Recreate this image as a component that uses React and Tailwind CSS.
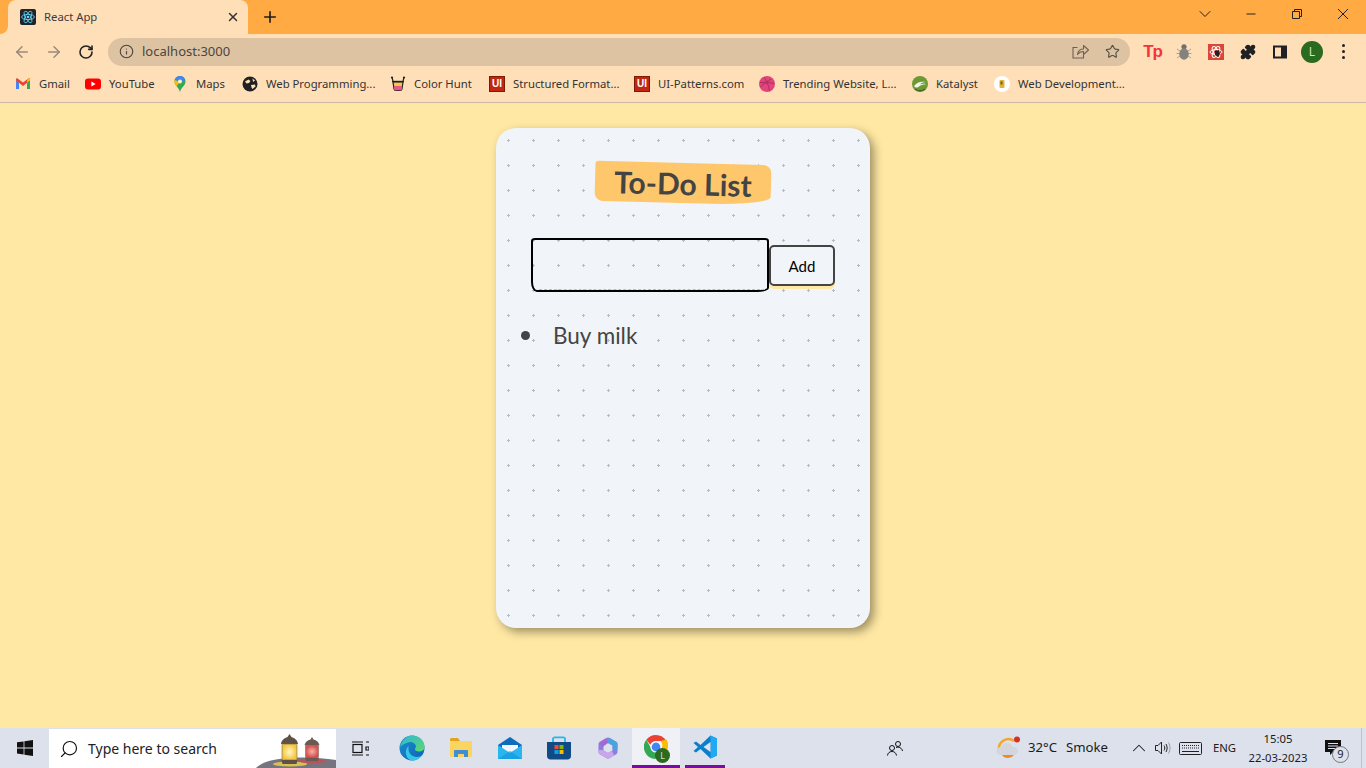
import { ArrowLeft, ArrowRight, RotateCw, Info, Star, Puzzle, X, Plus, ChevronDown, ChevronUp, Minus, Search } from "lucide-react";

function ReactIcon() {
  return (
    <svg width="16" height="16" viewBox="0 0 16 16" fill="none">
      <rect width="16" height="16" rx="2" fill="#20232a" />
      <g stroke="#61dafb" strokeWidth="0.8">
        <ellipse cx="8" cy="8" rx="6.4" ry="2.6" />
        <ellipse cx="8" cy="8" rx="6.4" ry="2.6" transform="rotate(60 8 8)" />
        <ellipse cx="8" cy="8" rx="6.4" ry="2.6" transform="rotate(120 8 8)" />
      </g>
      <circle cx="8" cy="8" r="1.3" fill="#61dafb" />
    </svg>
  );
}

function GmailIcon() {
  return (
    <svg width="16" height="16" viewBox="0 0 16 16">
      <path d="M1 4v9h3V6.5z" fill="#4285f4" />
      <path d="M15 4v9h-3V6.5z" fill="#34a853" />
      <path d="M1 4.5 8 10l7-5.5V3.2C15 2.4 14 2 13.4 2.5L8 6.6 2.6 2.5C2 2 1 2.4 1 3.2z" fill="#ea4335" />
      <path d="M12 4.1 13.4 2.5C14 2 15 2.4 15 3.2v1.3L12 6.8z" fill="#fbbc04" />
    </svg>
  );
}

function YouTubeIcon() {
  return (
    <svg width="16" height="16" viewBox="0 0 16 16">
      <rect y="2.5" width="16" height="11" rx="3" fill="#f00" />
      <path d="M6.4 5.6v4.8L10.6 8z" fill="#fff" />
    </svg>
  );
}

function MapsIcon() {
  return (
    <svg width="16" height="16" viewBox="0 0 16 16">
      <defs>
        <clipPath id="maps-pin">
          <path d="M8 0C4.700 0 2.500 2.500 2.500 5.500c0 4 4.500 6 5.500 10.500 1-4.500 5.500-6.500 5.500-10.500C13.500 2.500 11.300 0 8 0z" />
        </clipPath>
      </defs>
      <g clipPath="url(#maps-pin)">
        <rect width="16" height="16" fill="#34a853" />
        <path d="M0 0h16v3L8 6 0 3z" fill="#4285f4" />
        <path d="M0 3l8 3-5 6H0z" fill="#fbbc04" />
        <path d="M0 0h5L2 4H0z" fill="#ea4335" />
      </g>
      <circle cx="8" cy="5.500" r="2" fill="#fff3c4" />
    </svg>
  );
}

function GlobeIcon() {
  return (
    <svg width="16" height="16" viewBox="0 0 16 16">
      <circle cx="8" cy="8" r="7.500" fill="#202124" />
      <path d="M3 5.500 6.500 3.500 8.500 5 7 7 4.500 7.500zM9 9l4-.5.500 2L10.500 13 9.500 11.500zM10.500 2.500 13 4.500 11 6z" fill="#ffdfb8" />
    </svg>
  );
}

function ColorHuntIcon() {
  return (
    <svg width="16" height="16" viewBox="0 0 16 16">
      <path d="M3 6h10l-1 7c-.1 1-1 1.500-2 1.500H6c-1 0-1.900-.5-2-1.500z" fill="#f4c64a" stroke="#222" strokeWidth="1.200" />
      <path d="M3.800 10h8.400l-.5 3.500c-.1.500-.7.800-1.500.8H5.800c-.8 0-1.400-.3-1.500-.8z" fill="#e8578a" />
      <path d="M3 5 2 1.500M13 5l1-3.500" stroke="#222" strokeWidth="1.200" />
      <circle cx="2" cy="1.500" r="1.100" fill="#222" />
      <circle cx="14" cy="1.500" r="1.100" fill="#222" />
      <path d="M2 5.500h12" stroke="#222" strokeWidth="1.400" />
    </svg>
  );
}

function UiIcon() {
  return (
    <span className="flex h-4 w-4 items-center justify-center border border-[#7d1a08] bg-[#c1270f] font-['Liberation_Sans',sans-serif] text-[10px] leading-none font-bold text-white">
      UI
    </span>
  );
}

function DribbbleIcon() {
  return (
    <svg width="16" height="16" viewBox="0 0 16 16" fill="none">
      <circle cx="8" cy="8" r="8" fill="#e0457b" />
      <path d="M5 1.200c2.500 3 4.500 7.500 5.500 13.500M1 6.500c4 .2 8-.5 11-3.500M1.500 11c2.500-3.500 7-5.500 13.500-3.500" stroke="#a92b5b" strokeWidth="0.900" />
    </svg>
  );
}

function KatalystIcon() {
  return (
    <svg width="16" height="16" viewBox="0 0 16 16" fill="none">
      <circle cx="8" cy="8" r="8" fill="#6b9a35" />
      <path d="M2 10c3-4 7-5 12-4-3 0-5 1-6 2.500 2-.8 4-.8 6-.2-3 0-6 1-8 3-1.500.5-3 .200-4-1.300z" fill="#f3f4e8" />
      <path d="M3 13c3 2 7 2 10 0" stroke="#3f6a1c" strokeWidth="1.500" />
    </svg>
  );
}

function WebDevIcon() {
  return (
    <svg width="16" height="16" viewBox="0 0 16 16">
      <circle cx="8" cy="8" r="8" fill="#fff" />
      <rect x="5.500" y="4" width="5" height="8" rx="1" fill="#e0b13b" />
      <rect x="6.500" y="5.500" width="2" height="3" fill="#7b5d14" />
    </svg>
  );
}

function ShareIcon() {
  return (
    <svg width="17" height="15" viewBox="0 0 17 15" fill="none" stroke="#6a6258" strokeWidth="1.100">
      <path d="M5.500 3.500H1V14h10.500v-3" />
      <path d="M5.500 10.500C6 7 8.500 5 11.500 5V1.500L16.500 6l-5 4.500V7.500c-2.500 0-4.500 1-6 3z" strokeLinejoin="round" />
    </svg>
  );
}

function BugIcon() {
  return (
    <svg width="16" height="18" viewBox="0 0 16 18" fill="none">
      <path d="M1 6l3 2M15 6l-3 2M.5 10.500H4M15.500 10.500H12M1 15l3-2M15 15l-3-2" stroke="#a8a39b" strokeWidth="1" />
      <circle cx="8" cy="3.800" r="2.600" fill="#6f6f6f" />
      <ellipse cx="8" cy="11" rx="4.800" ry="5.800" fill="#85827e" />
    </svg>
  );
}

function RedExtIcon() {
  return (
    <svg width="16" height="16" viewBox="0 0 16 16" fill="none">
      <rect width="16" height="16" fill="#d8473a" />
      <g stroke="#fff" strokeWidth="1">
        <ellipse cx="8" cy="8" rx="6" ry="2.500" />
        <ellipse cx="8" cy="8" rx="6" ry="2.500" transform="rotate(60 8 8)" />
        <ellipse cx="8" cy="8" rx="6" ry="2.500" transform="rotate(120 8 8)" />
      </g>
      <path d="M7 7l4-1 1 4-2 3-3-2z" fill="#222" />
    </svg>
  );
}

function SidePanelIcon() {
  return (
    <svg width="14" height="14" viewBox="0 0 14 14">
      <rect width="14" height="13" y=".5" fill="#202124" />
      <rect x="2" y="2.500" width="6" height="9" fill="#ffdfb8" />
    </svg>
  );
}

function WindowsLogo() {
  return (
    <svg width="16" height="16" viewBox="0 0 16 16" fill="#111">
      <path d="M0 2.300 6.600 1.400V7.500H0zM7.400 1.300 16 0V7.500H7.400zM0 8.400H6.600V14.500L0 13.600zM7.400 8.400H16V16L7.400 14.700z" />
    </svg>
  );
}

function Lanterns() {
  return (
    <svg width="84" height="39" viewBox="0 0 84 39" className="block">
      <defs>
        <radialGradient id="glass-big">
          <stop offset="0" stopColor="#fff6c8" />
          <stop offset="1" stopColor="#f3c53c" />
        </radialGradient>
        <radialGradient id="glass-small">
          <stop offset="0" stopColor="#f7b3a8" />
          <stop offset="1" stopColor="#d4504f" />
        </radialGradient>
      </defs>
      <path d="M4 39C10 33 20 30 40 29c15-1 30 0 44 2v8z" fill="#77747f" />
      <ellipse cx="38" cy="35" rx="17" ry="2.500" fill="#d8c14e" />
      <ellipse cx="60" cy="32" rx="14" ry="2" fill="#b9535a" />
      <path d="M37.500 5l2 3c3 1 6 3 6.500 7H29c.5-4 3.500-6 6.500-7z" fill="#5f5048" />
      <rect x="30" y="15" width="15" height="16" rx="1" fill="url(#glass-big)" stroke="#7a6a50" strokeWidth="0.600" />
      <path d="M29.500 31h16l-1 4h-14z" fill="#5f5048" />
      <path d="M60 8l1.500 2.500c3 .8 5.500 2.500 6 6H52.500c.5-3.500 3-5.200 6-6z" fill="#6b5a52" />
      <rect x="53.500" y="16.500" width="13" height="12" rx="1" fill="url(#glass-small)" stroke="#7a5a50" strokeWidth="0.500" />
      <path d="M53 28.500h14l-1 3.500H54z" fill="#6b5a52" />
    </svg>
  );
}

function TaskViewIcon() {
  return (
    <svg width="17" height="15" viewBox="0 0 17 15" fill="none" stroke="#111" strokeWidth="1.200">
      <path d="M0 1h11M0 14h11" />
      <rect x="1" y="3.500" width="9" height="8" />
      <path d="M14 1h3M14 14h3M14 6h3v3h-3z" />
    </svg>
  );
}

function EdgeIcon() {
  return (
    <svg width="26" height="26" viewBox="0 0 26 26">
      <defs>
        <linearGradient id="edge-a" x1="0" y1="0" x2="1" y2="1">
          <stop offset="0" stopColor="#1a8fd0" />
          <stop offset="1" stopColor="#0f62b5" />
        </linearGradient>
        <linearGradient id="edge-b" x1="0" y1="0" x2="1" y2="1">
          <stop offset="0" stopColor="#2cb8d8" />
          <stop offset="1" stopColor="#5fd86c" />
        </linearGradient>
      </defs>
      <circle cx="13" cy="13" r="12.500" fill="url(#edge-a)" />
      <path d="M1 12C3 5 8 .5 13 .5c7 0 12.500 5 12.500 11.500 0 3-2.500 4.500-5.500 4.500-2.500 0-4.500-1-4-2.500.500-1.500 1.500-2 .5-4C15 7.500 12 6.500 9 7.500 5 9 2.500 10 1 12z" fill="url(#edge-b)" />
      <path d="M9.500 13c-.5 5 3.500 9 8.500 9 2 0 4-.8 5.500-2.500C21.500 23 18 25.500 14 25.500c-5 0-8-5-7-10 .3-1.500 1-3 2.500-4.500z" fill="#38c5e8" />
    </svg>
  );
}

function ExplorerIcon() {
  return (
    <svg width="22" height="20" viewBox="0 0 22 20">
      <path d="M0 1.500C0 .7.700 0 1.500 0H8l2 3H0z" fill="#e3a31c" />
      <rect y="3" width="22" height="16" rx="1" fill="#fcd462" />
      <path d="M4 19v-6c0-.5.500-1 1-1h12c.5 0 1 .5 1 1v6h-4v-3H8v3z" fill="#3f8fd4" />
    </svg>
  );
}

function MailIcon() {
  return (
    <svg width="24" height="22" viewBox="0 0 24 22">
      <path d="M12 0 0 8v4h24V8z" fill="#0f6cbd" />
      <path d="M4 8h16v6H4z" fill="#f2f5f9" />
      <path d="M0 8l12 8 12-8v14H0z" fill="#29b6f0" />
      <path d="M0 22 12 14l12 8z" fill="#0f8fd8" opacity=".55" />
    </svg>
  );
}

function StoreIcon() {
  return (
    <svg width="24" height="24" viewBox="0 0 24 24" fill="none">
      <path d="M6 6V3c0-1 .7-1.700 1.700-1.700h8.600C17.300 1.300 18 2 18 3v3" stroke="#2bb5e8" strokeWidth="1.800" />
      <path d="M0 6h24v14c0 2-1.500 3.500-3.500 3.500h-17C1.500 23.500 0 22 0 20z" fill="#124a86" />
      <rect x="7.500" y="9" width="4" height="4" fill="#f25022" />
      <rect x="12.500" y="9" width="4" height="4" fill="#7fba00" />
      <rect x="7.500" y="14" width="4" height="4" fill="#00a4ef" />
      <rect x="12.500" y="14" width="4" height="4" fill="#ffb900" />
    </svg>
  );
}

function M365Icon() {
  return (
    <svg width="20" height="22" viewBox="0 0 20 22" fill="none" strokeWidth="5" strokeLinejoin="round">
      <path d="M10 3 17 7v8l-7 4-7-4V7z" stroke="#8a7fe0" />
      <path d="M10 3 17 7v5" stroke="#4aa3dc" />
      <path d="M3 13v2l7 4 5-3" stroke="#c9a6ea" />
      <path d="M3 8 9 3.500" stroke="#a865d4" />
    </svg>
  );
}

function ChromeIcon() {
  return (
    <svg width="24" height="24" viewBox="0 0 24 24">
      <path d="M12 0a12 12 0 0 1 10.400 6H12a6 6 0 0 0-5.600 3.700L2.300 4.800A12 12 0 0 1 12 0z" fill="#ea4335" />
      <path d="M22.400 6A12 12 0 0 1 12 24l5.200-9A6 6 0 0 0 16.600 7.500z" fill="#fbbc04" transform="translate(0 -1.500)" />
      <path d="M2.300 4.800 7 13a6 6 0 0 0 8 3.500L11.500 24A12 12 0 0 1 2.300 4.800z" fill="#34a853" />
      <circle cx="12" cy="12" r="5" fill="#4285f4" stroke="#fff" strokeWidth="1.200" />
    </svg>
  );
}

function VsCodeIcon() {
  return (
    <svg width="24" height="24" viewBox="0 0 24 24">
      <path d="M17.500.5 24 3.500v17l-6.500 3-10-9.500-4.500 3.500L.5 16 5 12 .5 8 3 6.500l4.500 3.500z" fill="#0a7fcb" />
      <path d="M17.500.5 24 3.500v17l-6.500 3z" fill="#23a9f2" />
      <path d="M17.500 7 10.500 12l7 5z" fill="#dde2ec" />
    </svg>
  );
}

function PeopleIcon() {
  return (
    <svg width="16" height="15" viewBox="0 0 16 15" fill="none" stroke="#111" strokeWidth="1">
      <circle cx="5" cy="7" r="2.500" />
      <path d="M.5 14.500c.3-2.500 2-4 4.500-4s4 1.500 4.500 4" />
      <circle cx="11" cy="3" r="2.500" />
      <path d="M9 6.500c3-1 6 .5 6.500 3.500" />
    </svg>
  );
}

function WeatherIcon() {
  return (
    <svg width="26" height="24" viewBox="0 0 26 24">
      <path d="M3 14a9.500 9.500 0 0 1 15-9" fill="none" stroke="#f5a623" strokeWidth="2.500" />
      <path d="M6 19c2 4 9 4 12 0z" fill="#ef8a25" />
      <path d="M5 19c-3 0-4.500-2-4.500-4 0-2.500 2-4 4.500-4 1-3 3.500-4 6-4 3 0 5 2 5.500 4 3-.5 5.500 1.500 5.500 4s-2 4-4.500 4z" fill="#d3d6dc" />
      <circle cx="21" cy="3.500" r="3" fill="#d93025" />
    </svg>
  );
}

function SpeakerIcon() {
  return (
    <svg width="16" height="14" viewBox="0 0 16 14" fill="none" stroke="#222" strokeWidth="1">
      <path d="M.5 4.500h2.500L6.500 1v12L3 9.500H.5z" />
      <path d="M9 4.500c1 1.500 1 3.500 0 5M11 3c1.500 2.500 1.500 5.500 0 8" />
      <path d="M13.500 1.500c2 3.500 2 7.500 0 11" stroke="#999" />
    </svg>
  );
}

function KeyboardIcon() {
  return (
    <svg width="23" height="13" viewBox="0 0 23 13" fill="none" stroke="#222">
      <rect x=".5" y=".5" width="22" height="12" rx="1" />
      <path d="M3 3.500h17M3 6h17" strokeDasharray="1 1" />
      <path d="M3 9.500h17" />
    </svg>
  );
}

function NotificationIcon() {
  return (
    <svg width="16" height="16" viewBox="0 0 16 16">
      <path d="M0 0h16v12H8l-3 3v-3H0z" fill="#111" />
      <path d="M3 3.500h10M3 6h10M3 8.500h7" stroke="#dde2ec" />
    </svg>
  );
}

const bookmarks = [
  { label: "Gmail", icon: <GmailIcon />, cls: "w-[70px]" },
  { label: "YouTube", icon: <YouTubeIcon />, cls: "w-[87px]" },
  { label: "Maps", icon: <MapsIcon />, cls: "w-[70px]" },
  { label: "Web Programming...", icon: <GlobeIcon />, cls: "w-[148px]" },
  { label: "Color Hunt", icon: <ColorHuntIcon />, cls: "w-[99px]" },
  { label: "Structured Format...", icon: <UiIcon />, cls: "w-[145px]" },
  { label: "UI-Patterns.com", icon: <UiIcon />, cls: "w-[125px]" },
  { label: "Trending Website, L...", icon: <DribbbleIcon />, cls: "w-[153px]" },
  { label: "Katalyst", icon: <KatalystIcon />, cls: "w-[82px]" },
  { label: "Web Development...", icon: <WebDevIcon />, cls: "w-[140px]" },
];

function BrowserChrome() {
  return (
    <div className="font-['Noto_Sans',sans-serif] text-[#2b2b2b]">
      {/* tab strip */}
      <div className="flex h-[34px] bg-[#ffaa42]">
        <div className="w-2 bg-[#ffdfb8]">
          <div className="h-full rounded-br-lg bg-[#ffaa42]" />
        </div>
        <div className="mt-0 flex h-[34px] w-[240px] items-center rounded-t-lg bg-[#ffdfb8] pr-2 pl-3">
          <ReactIcon />
          <span className="ml-2 flex-1 text-[11.3px] text-[#3c3c3c]">React App</span>
          <X size={14} strokeWidth={2.5} className="text-[#333]" />
        </div>
        <Plus size={18} strokeWidth={2.2} className="mt-2 ml-[13px] text-[#1f1f1f]" />
        <div className="ml-auto flex items-start text-[#222]">
          <div className="flex h-7 w-[46px] items-center justify-center"><ChevronDown size={20} strokeWidth={1.2} /></div>
          <div className="flex h-7 w-[46px] items-center justify-center"><Minus size={14} strokeWidth={1.7} /></div>
          <div className="flex h-7 w-[46px] items-center justify-center">
            <svg width="10" height="10" viewBox="0 0 10 10" fill="none" stroke="#222"><path d="M.5 2.500h7v7h-7zM2.500 2.500V.5h7v7h-2" /></svg>
          </div>
          <div className="flex h-7 w-[46px] items-center justify-center">
            <svg width="12" height="12" viewBox="0 0 12 12" fill="none" stroke="#222"><path d="M1 1l10 10M11 1 1 11" /></svg>
          </div>
        </div>
      </div>
      {/* toolbar */}
      <div className="flex h-[35px] items-center bg-[#ffdfb8]">
        <div className="flex w-[108px] items-center">
          <ArrowLeft size={18} strokeWidth={2} className="ml-[13px] text-[#99897a]" />
          <ArrowRight size={18} strokeWidth={2} className="ml-[14px] text-[#99897a]" />
          <RotateCw size={16} strokeWidth={2.4} className="ml-[15px] text-[#222]" />
        </div>
        <div className="flex h-7 w-[1022px] items-center rounded-full bg-[#dec3a3] pr-[10px] pl-[11px]">
          <Info size={15} strokeWidth={1.8} className="text-[#4a4540]" />
          <span className="ml-[8px] flex-1 pt-px text-[13px] text-[#4a4540]">localhost:3000</span>
          <ShareIcon />
          <Star size={15} strokeWidth={1.8} className="ml-[16px] text-[#55504a]" />
        </div>
        <div className="flex flex-1 items-center">
          <div className="flex w-[32px] justify-end">
            <span className="font-['Liberation_Sans',sans-serif] text-[17px] leading-none font-bold tracking-[-1px] text-[#f5333f]">Tp</span>
          </div>
          <div className="ml-[14px] flex w-4 justify-center"><BugIcon /></div>
          <div className="ml-[16px]"><RedExtIcon /></div>
          <Puzzle size={16} fill="#202124" className="ml-[16px] text-[#202124]" />
          <div className="ml-[17px]"><SidePanelIcon /></div>
          <div className="ml-[14px] flex h-[22px] w-[22px] items-center justify-center rounded-full bg-[#2a6b1f] text-xs text-[#cfe5c5]">L</div>
          <div className="ml-[19px] flex flex-col gap-[3px]">
            <span className="h-[3px] w-[3px] rounded-full bg-[#222]" />
            <span className="h-[3px] w-[3px] rounded-full bg-[#222]" />
            <span className="h-[3px] w-[3px] rounded-full bg-[#222]" />
          </div>
        </div>
      </div>
      {/* bookmarks bar */}
      <div className="flex h-[34px] items-center border-b border-[#c9b9a4] bg-[#ffdfb8] pb-[3px] pl-[15px]">
        {bookmarks.map((b) => (
          <div key={b.label} className={`flex shrink-0 items-center gap-2 text-[11.3px] whitespace-nowrap text-[#333] ${b.cls}`}>
            <span className="flex h-4 w-4 shrink-0 items-center justify-center">{b.icon}</span>
            <span>{b.label}</span>
          </div>
        ))}
      </div>
    </div>
  );
}

function TodoCard() {
  return (
    <div className="mx-auto mt-[25px] h-[500px] w-[374px] rounded-[20px] bg-[#f1f5f9] bg-[radial-gradient(circle,#b5bbc2_1.1px,transparent_1.3px)] bg-[length:25px_25px] font-['Lato',sans-serif] shadow-[4px_4px_10px_rgba(0,0,0,0.38)]">
      <div className="flex justify-center pt-[35px]">
        <h1 className="flex h-[40px] w-[176px] rotate-[1.5deg] items-center justify-center rounded-[3px_8px_60px_8px/3px_8px_8px_8px] bg-[#ffc76b] text-[30px] leading-none font-bold text-[#444]">
          To-Do List
        </h1>
      </div>
      <div className="mt-[35px] flex items-center pl-[35px]">
        <div className="relative">
          <input
            aria-label="New task"
            className="block h-[54px] w-[238px] rounded-[4px_4px_12px_6px/3px_3px_4px_10px] border-2 border-black bg-transparent outline-none"
          />
          <div className="absolute right-[4px] bottom-[2px] left-[8px] border-b border-dashed border-[#f3b562]" />
        </div>
        <button className="h-[41px] w-[66px] rounded-[5px] border-2 border-[#444] bg-[#f1f5f9] pt-[3px] text-[15px] text-black shadow-[0_3px_0_#ffe8a3]">
          Add
        </button>
      </div>
      <ul className="mt-[24px] list-disc pl-[50px] text-[#444]">
        <li className="pl-[7px] text-[22.5px] leading-[34px] marker:text-[28px]">Buy milk</li>
      </ul>
    </div>
  );
}

function Taskbar() {
  return (
    <div className="flex h-10 items-stretch bg-[#dce1ec] font-['Noto_Sans',sans-serif] text-[#1b1b1b]">
      <div className="flex w-[49px] items-center justify-center"><WindowsLogo /></div>
      <div className="mt-px flex w-[287px] items-center overflow-hidden bg-white">
        <Search size={20} strokeWidth={1.4} className="ml-[10px] -scale-x-100 text-[#111]" />
        <span className="ml-[9px] flex-1 text-[14px] text-[#222]">Type here to search</span>
        <div className="self-end"><Lanterns /></div>
      </div>
      <div className="flex w-12 items-center justify-center"><TaskViewIcon /></div>
      <div className="ml-[3px] flex w-[49px] items-center justify-center"><EdgeIcon /></div>
      <div className="flex w-[49px] items-center justify-center"><ExplorerIcon /></div>
      <div className="flex w-[49px] items-center justify-center"><MailIcon /></div>
      <div className="flex w-[49px] items-center justify-center"><StoreIcon /></div>
      <div className="flex w-[49px] items-center justify-center"><M365Icon /></div>
      <div className="relative flex w-12 items-center justify-center border-b-[3px] border-[#7a0d9c] bg-[#f0f1f6]">
        <ChromeIcon />
        <span className="absolute top-[20px] left-[23px] flex h-[15px] w-[15px] items-center justify-center rounded-full bg-[#2a6b1f] text-[9px] text-[#cfe5c5]">L</span>
      </div>
      <div className="ml-[5px] flex w-10 items-center justify-center border-b-[3px] border-[#7a0d9c]"><VsCodeIcon /></div>
      <div className="ml-[162px] flex w-4 items-center"><PeopleIcon /></div>
      <div className="ml-[93px] flex w-[26px] items-center"><WeatherIcon /></div>
      <span className="ml-[6px] flex w-[38px] items-center text-[13.2px]">32°C</span>
      <span className="flex w-[63px] items-center text-[13.2px]">Smoke</span>
      <div className="flex w-[20px] items-center justify-center"><ChevronUp size={22} strokeWidth={1.1} className="shrink-0" /></div>
      <div className="ml-[6px] flex items-center"><SpeakerIcon /></div>
      <div className="ml-[8px] flex items-center"><KeyboardIcon /></div>
      <span className="ml-[11px] flex w-[25px] items-center text-[11.3px]">ENG</span>
      <div className="ml-[9px] flex w-[62px] flex-col items-center justify-center text-[11.3px] leading-[19px] whitespace-nowrap">
        <span>15:05</span>
        <span>22-03-2023</span>
      </div>
      <div className="relative ml-[16px] flex w-4 items-center">
        <NotificationIcon />
        <span className="absolute top-[18px] left-[7px] flex h-[17px] w-[17px] items-center justify-center rounded-full border border-[#777] bg-[#dce1ec] text-[11px]">9</span>
      </div>
      <div className="mr-[4px] ml-auto w-px bg-[#bcc2ce]" />
    </div>
  );
}

export default function App() {
  return (
    <div className="flex h-[768px] w-[1366px] flex-col overflow-hidden bg-[#ffe8a3]">
      <BrowserChrome />
      <div className="flex-1">
        <TodoCard />
      </div>
      <Taskbar />
    </div>
  );
}
